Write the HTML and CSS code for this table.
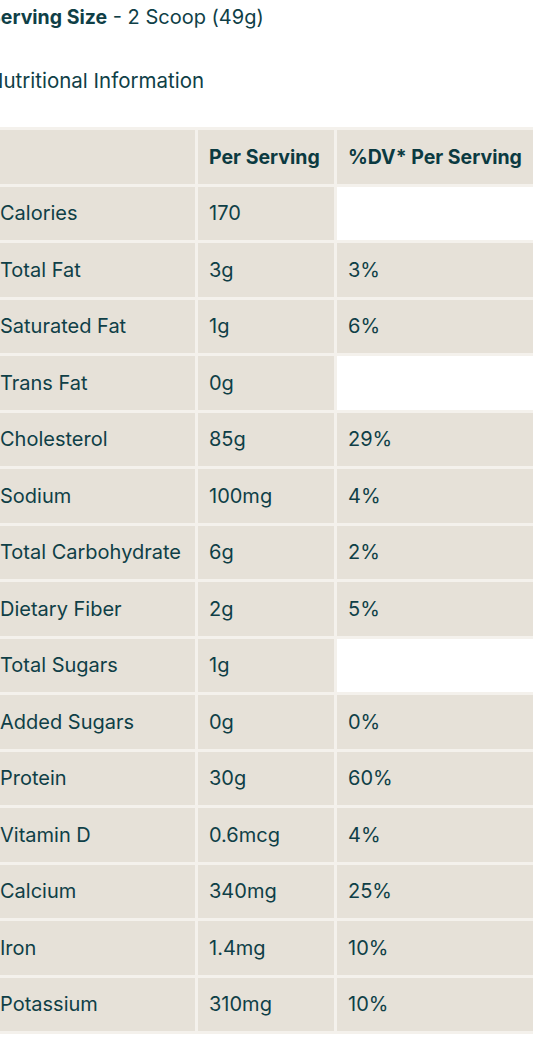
FILE: index.html
```html
<!DOCTYPE html>
<html lang="en">
<head>
<meta charset="utf-8">
<link rel="stylesheet" href="styles.css">
</head>
<body>
<div class="panel">
  <p class="serving"><strong>Serving Size</strong> - 2 Scoop (49g)</p>
  <p class="title">Nutritional Information</p>
  <table class="facts">
    <colgroup><col class="c1"><col class="c2"><col class="c3"></colgroup>
    <thead>
      <tr><th></th><th>Per Serving</th><th>%DV* Per Serving</th></tr>
    </thead>
    <tbody>
      <tr><td>Calories</td><td>170</td><td class="empty"></td></tr>
      <tr><td>Total Fat</td><td>3g</td><td>3%</td></tr>
      <tr><td>Saturated Fat</td><td>1g</td><td>6%</td></tr>
      <tr><td>Trans Fat</td><td>0g</td><td class="empty"></td></tr>
      <tr><td>Cholesterol</td><td>85g</td><td>29%</td></tr>
      <tr><td>Sodium</td><td>100mg</td><td>4%</td></tr>
      <tr><td>Total Carbohydrate</td><td>6g</td><td>2%</td></tr>
      <tr><td>Dietary Fiber</td><td>2g</td><td>5%</td></tr>
      <tr><td>Total Sugars</td><td>1g</td><td class="empty"></td></tr>
      <tr><td>Added Sugars</td><td>0g</td><td>0%</td></tr>
      <tr><td>Protein</td><td>30g</td><td>60%</td></tr>
      <tr><td>Vitamin D</td><td>0.6mcg</td><td>4%</td></tr>
      <tr><td>Calcium</td><td>340mg</td><td>25%</td></tr>
      <tr><td>Iron</td><td>1.4mg</td><td>10%</td></tr>
      <tr><td>Potassium</td><td>310mg</td><td>10%</td></tr>
    </tbody>
  </table>
</div>
</body>
</html>
```

FILE: styles.css
```css
html, body {
  margin: 0;
  padding: 0;
  background: #ffffff;
}
body {
  font-family: "Inter", "Lato", sans-serif;
  color: #0f3f47;
  overflow: hidden;
}
.panel {
  margin-left: -12px;
  width: 545px;
}
.serving {
  margin: 0;
  padding-top: 5px;
  font-size: 20px;
  line-height: 24px;
}
.serving strong {
  font-weight: 700;
  font-size: 19.5px;
}
.title {
  margin: 40px 0 0;
  font-size: 20.5px;
  line-height: 24px;
}
.facts {
  margin-top: 34px;
  width: 546px;
  border-collapse: collapse;
  table-layout: fixed;
  font-size: 20px;
}
.c1 { width: 207px; }
.c2 { width: 139px; }
.c3 { width: 200px; }
.facts th,
.facts td {
  background: #e6e1d8;
  border: 3px solid #f4f1ec;
  height: 53.5px;
  padding: 0 6px 0 11px;
  text-align: left;
  vertical-align: middle;
  white-space: nowrap;
}
.facts th:first-child,
.facts td:first-child {
  padding-left: 9px;
}
.facts th {
  font-weight: 700;
  font-size: 19.5px;
  color: #0b3a41;
}
.facts td.empty {
  background: #ffffff;
}
```
